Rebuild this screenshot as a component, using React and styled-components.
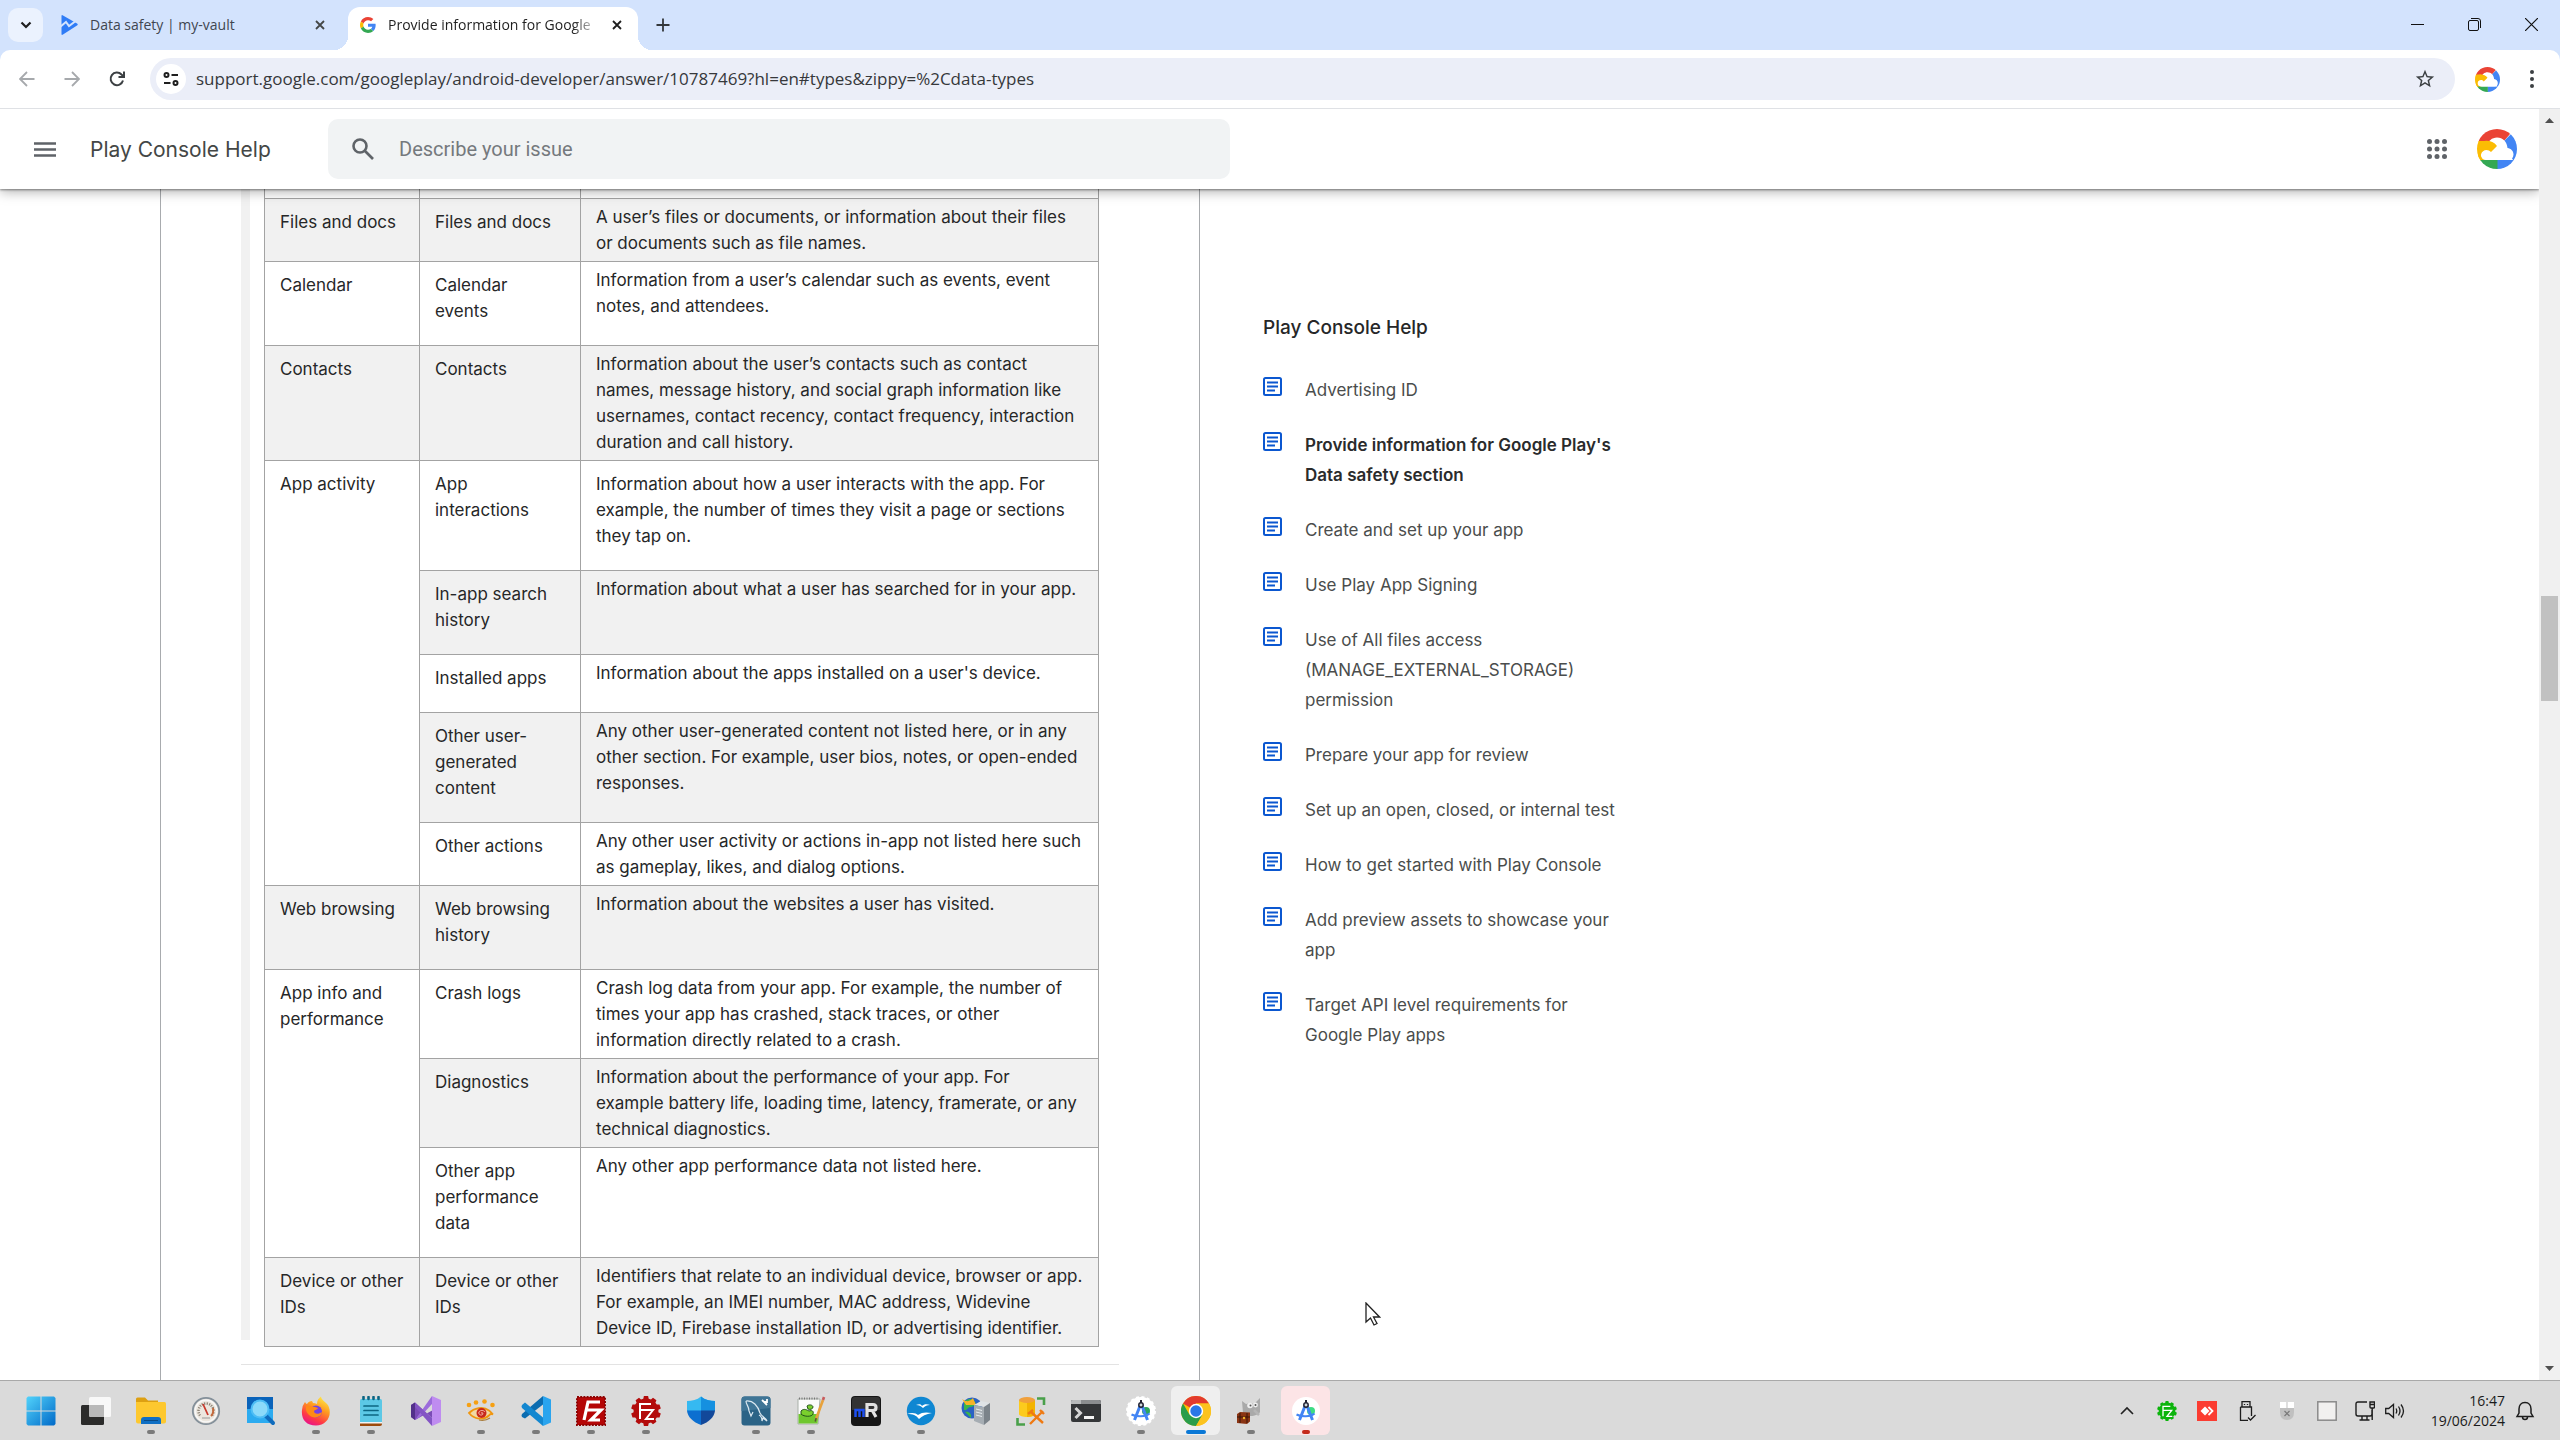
import React from 'react';
import styled, { createGlobalStyle, css } from 'styled-components';

const ui = '"Open Sans", "Noto Sans", sans-serif';
const body = 'Inter, Roboto, sans-serif';

const Global = createGlobalStyle`
  *, *::before, *::after { box-sizing: border-box; }
  html, body { margin: 0; height: 100%; }
  #root { height: 100%; }
  body { font-family: ${body}; color: #262728; background: #fff; overflow: hidden; }
  button, input { font: inherit; color: inherit; border: 0; padding: 0; background: none; outline: 0; }
  svg { display: block; flex: none; }
  a { color: inherit; text-decoration: none; }
`;

const Desktop = styled.div`
  display: flex;
  flex-direction: column;
  height: 100vh;
`;

/* ---------- browser chrome ---------- */

const TabStrip = styled.div`
  flex: none;
  display: flex;
  height: 50px;
  padding-left: 8px;
  background: #d3e3fd;
  font: 14px/20px ${ui};
`;

const IconButton = styled.button`
  flex: none;
  display: flex;
  align-items: center;
  justify-content: center;
  width: ${(p) => p.$w || 32}px;
  height: ${(p) => p.$h || 32}px;
  border-radius: ${(p) => p.$r || 0}px;
  background: ${(p) => p.$bg || 'transparent'};
`;

const TabSearch = styled(IconButton)`
  margin: 8px 9px 0 0;
`;

const Tab = styled.div`
  position: relative;
  display: flex;
  align-items: center;
  width: ${(p) => (p.$active ? 290 : 296)}px;
  height: 36px;
  margin-top: 7px;
  padding: ${(p) => (p.$active ? '0 10px 0 12px' : '0 15px 0 0')};
  ${(p) =>
    p.$active &&
    css`
      height: 43px;
      padding-bottom: 7px;
      border-radius: 12px 12px 0 0;
      background: #fff;
      &::before,
      &::after {
        content: '';
        position: absolute;
        bottom: 0;
        width: 14px;
        height: 14px;
      }
      &::before {
        left: -14px;
        background: radial-gradient(circle at 0 0, transparent 14px, #fff 14px);
      }
      &::after {
        right: -14px;
        background: radial-gradient(circle at 100% 0, transparent 14px, #fff 14px);
      }
    `}
`;

const TabTitle = styled.span`
  flex: 1;
  min-width: 0;
  margin: 0 10px 0 ${(p) => (p.$active ? 12 : 10)}px;
  white-space: nowrap;
  color: ${(p) => (p.$active ? '#1f1f1f' : '#3f4650')};
  ${(p) => p.$active && 'mask-image: linear-gradient(to right, #000 185px, transparent 212px);'}
`;

const NewTab = styled(IconButton)`
  margin: 9px auto 0 9px;
`;

const Toolbar = styled.div`
  flex: none;
  display: flex;
  align-items: center;
  height: 59px;
  padding-left: 5px;
  background: #fff;
  border-bottom: 1px solid #dfe1e5;
  border-radius: 10px 10px 0 0;
`;

const ToolbarBack = styled.div`
  flex: none;
  background: #d3e3fd;
`;

const Omnibox = styled.form`
  flex: 1;
  display: flex;
  align-items: center;
  height: 42px;
  margin: 0 16px 0 10px;
  padding: 0 14px 0 6px;
  border-radius: 21px;
  background: #ebeef8;
`;

const Address = styled.input`
  flex: 1;
  min-width: 0;
  margin-left: 10px;
  font: 17px/24px ${ui};
  color: #36383b;
`;

const Nav = styled.nav`
  display: flex;
  gap: 13px;
  padding: 0 7px 0 6px;
`;

/* ---------- page ---------- */

const Viewport = styled.div`
  flex: 1;
  min-height: 0;
  display: flex;
`;

const Page = styled.div`
  flex: 1;
  min-width: 0;
  display: flex;
  flex-direction: column;
  overflow: hidden;
`;

const HelpHeader = styled.header`
  flex: none;
  position: relative;
  z-index: 1;
  display: flex;
  align-items: center;
  height: 80px;
  padding: 0 22px 0 29px;
  background: #fff;
  box-shadow: 0 1px 2px rgba(0, 0, 0, 0.4), 0 2px 12px rgba(0, 0, 0, 0.35);
`;

const HelpTitle = styled.a`
  flex: none;
  width: 238px;
  margin-left: 29px;
  padding-top: 2px;
  font-size: 21px;
  line-height: 30px;
  color: #444746;
`;

const SearchBox = styled.form`
  display: flex;
  align-items: center;
  width: 902px;
  height: 60px;
  margin-right: auto;
  padding-left: 23px;
  border-radius: 10px;
  background: #f1f3f4;
`;

const SearchInput = styled.input`
  flex: 1;
  min-width: 0;
  margin-left: 24px;
  font: 20px/28px Roboto, sans-serif;
  color: #444746;
  &::placeholder {
    color: #75797d;
    opacity: 1;
  }
`;

const HeaderActions = styled.div`
  display: flex;
  align-items: center;
  gap: 20px;
`;

const Columns = styled.main`
  flex: 1;
  min-height: 0;
  display: flex;
  overflow: hidden;
`;

const Article = styled.article`
  flex: none;
  width: 1040px;
  margin-left: 160px;
  padding: 0 80px;
  border: solid #a8abae;
  border-width: 0 1px;
`;

const Zippy = styled.section`
  padding-left: 14px;
  padding-bottom: 1px;
  border-left: 9px solid #f1f1f1;
`;

const Rule = styled.hr`
  margin: 24px 0 0;
  border: 0;
  border-top: 1px solid #e3e3e3;
`;

const DataTable = styled.table`
  width: 834px;
  margin-bottom: -8px;
  border-collapse: collapse;
  table-layout: fixed;
  font-size: 17px;
  line-height: 26px;
`;

const Column = styled.col`
  width: ${(p) => p.$w}px;
`;

const Row = styled.tr`
  background: ${(p) => (p.$shaded ? '#f1f1f1' : '#fff')};
`;

const Cell = styled.td`
  padding: 5px 0 5px 15px;
  border: 1px solid #a3a3a3;
  vertical-align: top;
  text-align: left;
  white-space: nowrap;
  background: ${(p) => (p.$plain ? '#fff' : 'inherit')};
`;

const CutCell = styled.td`
  height: 9px;
  padding: 0;
  border: solid #a3a3a3;
  border-width: 0 1px 1px;
`;

const Para = styled.p`
  margin: 5px 0 16px;
`;

const Aside = styled.aside`
  padding: 125px 0 0 63px;
`;

const AsideTitle = styled.h2`
  margin: 0 0 33px;
  font-size: 19px;
  line-height: 28px;
  font-weight: 500;
`;

const Links = styled.ul`
  display: flex;
  flex-direction: column;
  gap: 25px;
  margin: 0;
  padding: 0;
  list-style: none;
`;

const LinkRow = styled.a`
  display: flex;
  gap: 23px;
  font-size: 17px;
  line-height: 30px;
  font-weight: ${(p) => (p.$current ? 600 : 400)};
  color: ${(p) => (p.$current ? '#2a2b2c' : '#4a4d4c')};
  svg { margin-top: 2px; }
`;

const Scrollbar = styled.div`
  flex: none;
  display: flex;
  flex-direction: column;
  align-items: center;
  width: 21px;
  background: #f0f0f0;
`;

const ScrollTrack = styled.div`
  flex: 1;
  width: 17px;
`;

const ScrollThumb = styled.div`
  height: 105px;
  background: #c1c1c1;
`;

const Pointer = styled.svg`
  position: absolute;
  left: 1365px;
  top: 1302px;
`;

/* ---------- taskbar ---------- */

const Taskbar = styled.footer`
  flex: none;
  display: flex;
  align-items: center;
  height: 60px;
  padding: 0 23px 0 13px;
  background: #dadada;
  border-top: 1px solid #a9a9a9;
`;

const Apps = styled.div`
  display: flex;
  margin-right: auto;
`;

const AppButton = styled.button`
  position: relative;
  display: flex;
  align-items: center;
  justify-content: center;
  width: 49px;
  height: 49px;
  margin: 0 3px;
  border-radius: 6px;
  background: ${(p) => p.$tile || 'transparent'};
  &::after {
    content: '';
    position: absolute;
    bottom: 1px;
    width: ${(p) => (p.$wide ? 20 : 8)}px;
    height: 4px;
    border-radius: 2px;
    background: ${(p) => p.$mark || 'transparent'};
  }
`;

const Tray = styled.div`
  display: flex;
  align-items: center;
  gap: 8px;
`;

const TrayPair = styled.div`
  display: flex;
  align-items: center;
  gap: 10px;
  padding: 0 4px;
`;

const Clock = styled.time`
  width: 88px;
  text-align: right;
  font: 14px/20px ${ui};
  color: #1b1b1b;
`;

/* ---------- drawings ---------- */

const CloseIcon = ({ c }) => (
  <svg width="10" height="10" viewBox="0 0 10 10" stroke={c} strokeWidth="1.8"><path d="M1 1l8 8M9 1L1 9" /></svg>
);

const CloudLogo = ({ size, id }) => (
  <svg width={size} height={size} viewBox="0 0 40 40">
    <clipPath id={id}><circle cx="20" cy="20" r="20" /></clipPath>
    <g clipPath={`url(#${id})`}>
      <path fill="#ea4335" d="M0 0h40v5H33L27 12 14 14 2 14z" />
      <path fill="#4285f4" d="M34 5L27 12 30 20 36 31H20v9h20V5z" />
      <path fill="#fbbc04" d="M0 12h10v20H0z" />
      <path fill="#34a853" d="M0 31h20.500v9H0z" />
      <path fill="#fff" d="M9 31a5.200 5.200 0 0 1-3-9.500L10 17C11 12 15 8.500 20 8.500c6 0 10 4.500 10.500 10.500 3.500.5 6 3 6 6.500a5.500 5.500 0 0 1-5.500 5.500z" />
      <path fill="#fbbc04" d="M1 15C5 11 15 10 20 17l-6 6c-3-3.500-9-2.500-10 2.500-.3 2 .5 4 2 5.500H1z" />
    </g>
  </svg>
);

const ArticleIcon = () => (
  <svg width="19" height="19" viewBox="0 0 19 19" fill="none" stroke="#0b57d0" strokeWidth="2">
    <rect x="1" y="1" width="17" height="17" rx="1.500" />
    <path d="M4 5.500h11M4 9.500h11M4 13.500h8" />
  </svg>
);

const I = ({ children, s = 30, vb = 30, ...r }) => (
  <svg width={s} height={s} viewBox={`0 0 ${vb} ${vb}`} fill="none" {...r}>{children}</svg>
);

const gearPath = (() => {
  const n = 10;
  let d = '';
  for (let i = 0; i < n; i++) {
    const a = (i / n) * Math.PI * 2 - Math.PI / 2;
    [[-0.22, 12.5], [-0.14, 15], [0.14, 15], [0.22, 12.5]].forEach(([o, r]) => {
      d += `${d ? 'L' : 'M'}${(15 + r * Math.cos(a + o)).toFixed(1)} ${(15 + r * Math.sin(a + o)).toFixed(1)}`;
    });
  }
  return d + 'z';
})();

const FzLines = () => (
  <path d="M9 23V8h11M9 14h7M15 14h7l-7 9h8" stroke="#fff" strokeWidth="2" />
);

const Studio = ({ halo }) => (
  <I>
    <circle cx="15" cy="15" r="14" fill="#fff" />
    {halo && <circle cx="15" cy="15" r="14" stroke="#fff" strokeDasharray="3 2.500" strokeWidth="2" />}
    <circle cx="20" cy="15" r="4" fill={halo ? '#2da55d' : '#3ddc84'} />
    <path d="M14 10L8.500 24M16 10l5.500 14" stroke="#4285f4" strokeWidth="3" />
    <path d="M5.500 18.500c5 2.500 14 2.500 18-1" stroke="#4285f4" strokeWidth="2.200" />
    <path d="M15 4v4" stroke="#223" strokeWidth="2" />
    <circle cx="15" cy="9" r="2.200" fill="#cfd8dc" stroke="#223" strokeWidth="1.500" />
  </I>
);

const icons = {
  start: (
    <I>
      <linearGradient id="win" x1="0" y1="0" x2="1" y2="1"><stop stopColor="#52d3fb" /><stop offset="1" stopColor="#0069c8" /></linearGradient>
      <path fill="url(#win)" d="M2 .5h12.500v14H.5V2zM15.500.5H28L29.500 2v12.500h-14zM.5 15.500h14v14H2L.5 28zM15.500 15.500h14V28L28 29.500H15.500z" />
    </I>
  ),
  views: (
    <I>
      <rect x="0" y="9" width="23" height="20" rx="1.500" fill="#2b2b2a" />
      <rect x="8" y="1" width="22" height="20" rx="1.500" fill="#fff" fillOpacity=".8" />
      <path d="M8 9h15v12H9.500L8 19.500z" fill="#b9b9b9" />
    </I>
  ),
  files: (
    <I>
      <path d="M0 3q0-1.500 1.500-1.500H9l3 3h10V12H0z" fill="#dda012" />
      <path d="M0 6h28.500q1.500 0 1.500 1.500v18q0 2-2 2H2q-2 0-2-2z" fill="#fdc82f" />
      <path d="M5 28v-4q0-3 3-3h14q3 0 3 3v4z" fill="#0f6fc4" />
      <path d="M8 24.500h14" stroke="#0a4a85" />
    </I>
  ),
  gauge: (
    <I>
      <circle cx="15" cy="15" r="13.200" fill="#d9d5cf" stroke="#84909a" strokeWidth="1.800" />
      <circle cx="15" cy="15" r="11" fill="#ece7df" stroke="#f8f8f8" strokeWidth="1.500" />
      <path d="M9 19.500a7.500 7.500 0 1 1 12 0" stroke="#8e8478" strokeWidth="2.500" strokeDasharray="1.200 1.200" />
      <path d="M20 20q3-3 2-8" stroke="#c46a3d" strokeWidth="2" />
      <path d="M12 8l5 11" stroke="#c9392c" strokeWidth="1.800" />
      <path d="M11 22h8" stroke="#999" />
    </I>
  ),
  search: (
    <I>
      <path d="M1 1h26v13H1z" fill="#0a63ba" /><path d="M1 13h26v14H1z" fill="#2cabf0" />
      <path d="M19 19l8 8" stroke="#0f6cbd" strokeWidth="4" strokeLinecap="round" />
      <circle cx="14" cy="13" r="8.500" fill="#8bdafa" stroke="#4dbdf5" strokeWidth="2" />
    </I>
  ),
  firefox: (
    <I>
      <linearGradient id="ff" x1=".8" y1="0" x2=".3" y2="1"><stop stopColor="#fff04a" /><stop offset=".4" stopColor="#ff9a1f" /><stop offset=".75" stopColor="#ff3a45" /><stop offset="1" stopColor="#e8118c" /></linearGradient>
      <path d="M4 6q1 2 2 2c1-2 3-3 5-3l1 2q2 0 4 1c0-4 2-6 4-7.500 0 4 7 6 8 11 3 9-3 18-13 18S0 23 1 14q.5-5 3-8z" fill="url(#ff)" />
      <circle cx="15" cy="15.500" r="6" fill="#7542e5" />
      <path d="M5 10c4-1 6 1 9 1l3 1c-1 2-4 2-4 3 0 3 4 4 8 1-1 7-13 8-16-2z" fill="#ff8a16" />
    </I>
  ),
  notepad: (
    <I>
      <rect x="4" y="3" width="22" height="24" rx="1.500" fill="#5cc8e6" />
      <path d="M4 27h22v1q0 2-2 2H4z" fill="#9c4a0c" /><path d="M4 26h22v1.500H4z" fill="#f3f3f3" />
      <path d="M8 10h14M8 14.500h14M8 19h14" stroke="#0b6583" strokeWidth="1.700" strokeLinecap="round" />
      <path d="M7.500 1v2M12.500 1v2M17.500 1v2M22.500 1v2" stroke="#0b6583" strokeWidth="2.600" strokeLinecap="round" />
    </I>
  ),
  vs: (
    <I>
      <path d="M0 9l4-2.500L22 23v-9L4 24 0 21z" fill="#7a4bb5" />
      <path d="M0 9l4-2.500V24L0 21z" fill="#52308a" />
      <path d="M4 24L21 0v8L9 21z" fill="#9b6bdb" />
      <path d="M21 0l9 4v22l-9 4z" fill="#bf8cf0" />
      <path d="M4 6.500l17 15.500v8L4 11z" fill="#8354c4" />
    </I>
  ),
  eye: (
    <I>
      <path d="M3 17C8 12 17 10 23 14.500c2 1.500 2.500 2.500 4 4-2-1-3-.5-4 1-5 5-15 4-20-2.500z" fill="#f1d9a4" stroke="#f0960f" strokeWidth="1.800" />
      <circle cx="15.500" cy="17" r="5" fill="#c8281c" />
      <path d="M15 17q2-1 2 1c-1 2-5 1-4-2 1-2 5-2 6 0" stroke="#f2b6a8" />
      <path d="M13 24c5 1 8 0 11-2" stroke="#a87b3a" strokeWidth="1.200" />
      <g fill="#f6a013"><circle cx="3" cy="9" r="2.300" /><circle cx="10" cy="6.500" r="2.300" /><circle cx="18.500" cy="5.500" r="2.300" /><circle cx="26.500" cy="9" r="2.300" /></g>
    </I>
  ),
  code: (
    <I>
      <path d="M22 0l8 3.500v23L22 30z" fill="#2aa4ee" />
      <path d="M22 0v8.500L4 22.500 1 21q-1-1.500 0-3z" fill="#0b6cb0" />
      <path d="M1 9l3-2.500 18 15V30L1 12q-1-1.500 0-3z" fill="#1387d0" />
    </I>
  ),
  fzSquare: (
    <I>
      <rect x="1" y="1" width="28" height="28" fill="#b50606" stroke="#8d0404" strokeWidth="2" strokeDasharray="2 1.200" />
      <path d="M8 24L12 6h12M10 14h9M15 14h10L15 24h9" stroke="#fff" strokeWidth="3.200" />
    </I>
  ),
  fzGear: (<I><path d={gearPath} fill="#b30b0b" /><FzLines /></I>),
  shield: (
    <I>
      <path d="M15 .5C19 4 24 5 29 5v10H1V5C6 5 11 4 15 .5z" fill="#35b9f1" /><path d="M15 .5C19 4 24 5 29 5v10H15z" fill="#1590e0" />
      <path d="M1 14.500h14V29C7 26 1.500 21 1 14.500z" fill="#0c6fd0" /><path d="M29 14.500H15V29c8-3 13.500-8 14-14.500z" fill="#12489a" />
    </I>
  ),
  mysql: (
    <I>
      <rect x=".5" y=".5" width="29" height="29" rx="3" fill="#2b6386" />
      <path d="M.5 15V4q0-3.500 3.500-3.500h22q3.500 0 3.500 3.500v8z" fill="#3f7596" />
      <path d="M5 5c7-1 12 5 14 12 2 4 5 4 7 8l-4-3-1 3c0-3-1-5-3-6M5 5c0 4 3 5 3 10l2 5 2-4" stroke="#dbe8f0" strokeWidth="1.200" />
      <path d="M21 4l5 5M26 3v3h-3" stroke="#fff" strokeWidth="1.800" />
    </I>
  ),
  npp: (
    <I>
      <path d="M2 3h22l-2 25H2z" fill="#fbfbfb" stroke="#a9b0a9" /><path d="M2.500 18h20l-1 9.500h-19z" fill="#6fc72e" />
      <path d="M3 2.500h20" stroke="#777" strokeDasharray="1 1.500" strokeWidth="2" />
      <path d="M5 15c3-3 6-1 8 0 3-1 5 0 4 3s-9 3-12 0zM11 10c2-2 6-1 6 1s-3 3-5 2z" fill="#7ad02d" stroke="#22531a" />
      <path d="M27 4l-7 19" stroke="#e8a23c" strokeWidth="2.600" /><path d="M28 1l-1 3" stroke="#c85c5c" strokeWidth="2.600" /><path d="M20.200 22l-1 3.500" stroke="#553" strokeWidth="1.500" />
    </I>
  ),
  mr: (
    <I>
      <rect width="30" height="30" rx="4" fill="#161616" /><path d="M1 14V4q0-3 3-3h22q3 0 3 3v10z" fill="#333" />
      <path d="M4.500 21v-7h8v7M8.500 14v7" stroke="#1d4ff0" strokeWidth="2.500" />
      <path d="M16 21V8.500h6q3 0 3 3t-3 3h-5M21 14l4 7" stroke="#e2e2e2" strokeWidth="3.200" />
    </I>
  ),
  gull: (
    <I>
      <circle cx="15" cy="15" r="14.200" fill="#0f87d2" />
      <path d="M10 9c3-1 5-1 6 1 2-2 5-2 8-1-3 0-5 1-7 3-2-2-4-3-7-3zM1 18c5-2 9-1 11 1 4-3 8-3 14-2-6 1-10 3-13 6-3-4-6-5-12-5z" fill="#fff" />
    </I>
  ),
  server: (
    <I>
      <circle cx="11" cy="12" r="10.500" fill="#2a62c4" /><path d="M3 6c5-5 9-3 11 0s-3 5-5 5-3 4-6 3zM4 16c4-1 7 2 6 6z" fill="#3bb54a" />
      <path d="M1 3q7 5 11-1l3 7H5z" fill="#f6b229" />
      <path d="M13 9l7-4 9 2-6 4z" fill="#dfe3e6" /><path d="M13 9l10 2v18l-10-4z" fill="#a6adb3" /><path d="M23 11l6-4v17l-6 5z" fill="#7b838a" />
      <path d="M15 13l6 1.500M15 16l6 1.500M15 19l6 1.500" stroke="#e8edf0" />
    </I>
  ),
  dbTools: (
    <I>
      <path d="M3 4v14c0 4 16 4 16 0V4z" fill="#fccb1d" /><path d="M11 4h8v14q-2 3-8 3z" fill="#f3b400" /><ellipse cx="11" cy="4" rx="8" ry="3" fill="#f0a03c" />
      <path d="M21 2.500h7V9M1.500 22v6.500H9" stroke="#49a04a" strokeWidth="2.600" />
      <path d="M14 15l13 12M27 15L14 28M12 18l5-4M24 14l4 4" stroke="#ef7a12" strokeWidth="2.400" />
    </I>
  ),
  terminal: (
    <I>
      <rect y="4" width="30" height="22" rx="2" fill="#343638" /><path d="M2 4h26q2 0 2 2v2H0V6q0-2 2-2z" fill="#8b8d8f" /><path d="M0 8V6q0-2 2-2h8v4z" fill="#b8babb" />
      <path d="M4.500 12l5 5-5 5" stroke="#d5d5d5" strokeWidth="3" /><path d="M13 21.500h10" stroke="#f4f4f4" strokeWidth="3" />
    </I>
  ),
  studio: <Studio halo />,
  chrome: (
    <I>
      <circle cx="15" cy="15" r="15" fill="#fbbc04" />
      <path d="M15 15L2 7.500A15 15 0 0 1 28 7.500H15z" fill="#e33b2e" />
      <path d="M2 7.500A15 15 0 0 0 15 30l6.500-11.300L15 15 8.500 18.700z" fill="#2a9d4a" />
      <path d="M28 7.500H15V15l6.500 3.700L15 30A15 15 0 0 0 28 7.500z" fill="#fcc31e" />
      <circle cx="15" cy="15" r="7.200" fill="#fff" /><circle cx="15" cy="15" r="5.700" fill="#2a77e8" />
    </I>
  ),
  gimp: (
    <I>
      <path d="M6 5l4 3c3-1 6-1 8 0l6-6v14c-1 4-14 6-17 1z" fill="#a9a9a9" /><circle cx="14" cy="9.500" r="2.800" fill="#efefef" /><circle cx="19.500" cy="9" r="2.400" fill="#efefef" />
      <circle cx="14.500" cy="9.500" r="1" fill="#555" /><circle cx="19.500" cy="9" r="1" fill="#555" />
      <path d="M18 14l5 5" stroke="#b5b5b5" strokeWidth="2.500" />
      <path d="M1 18l3-2 10 .5v9L11 28 1 27z" fill="#8a3413" /><path d="M1 21h13M4 17v10M11 17v10" stroke="#3a1408" /><circle cx="8" cy="22" r="1.200" fill="#f0b429" />
    </I>
  ),
  studioAlert: <Studio />,
};

const apps = [
  ['Start', 'start'], ['Task View', 'views'], ['File Explorer', 'files', '#7a7a7a'], ['Monitor', 'gauge'], ['Search', 'search'],
  ['Firefox', 'firefox', '#7a7a7a'], ['Notepad', 'notepad', '#7a7a7a'], ['Visual Studio', 'vs'], ['XnView', 'eye', '#7a7a7a'],
  ['Visual Studio Code', 'code', '#7a7a7a'], ['FileZilla', 'fzSquare', '#7a7a7a'], ['FileZilla Server', 'fzGear', '#7a7a7a'],
  ['Security', 'shield'], ['MySQL Workbench', 'mysql', '#7a7a7a'], ['Notepad++', 'npp', '#7a7a7a'], ['mRemote', 'mr'],
  ['OpenOffice', 'gull', '#7a7a7a'], ['Server', 'server'], ['Database Tools', 'dbTools'], ['Terminal', 'terminal'],
  ['Android Studio', 'studio', '#7a7a7a'], ['Chrome', 'chrome', '#0a78d6', '#efefef'], ['GIMP', 'gimp', '#7a7a7a'],
  ['Android Studio project', 'studioAlert', '#c42b1c', '#fce4e6'],
];

const tray = [
  ['Show hidden icons', <I s={20} vb={20}><path d="M4 13l6-6 6 6" stroke="#222" strokeWidth="1.600" /></I>],
  ['FileZilla Server', <I s={20}><path d={gearPath} fill="#0cb40c" /><FzLines /></I>],
  ['AnyDesk', <I s={20} vb={20}><path d="M0 0h20v20H0z" fill="#fb3c31" /><path d="M8 5.500l4.500 4.500L8 14.500 3.500 10z" fill="#fff" /><path d="M11.500 6l4 4-4 4" stroke="#fff" strokeWidth="1.800" /></I>],
  ['Safely remove hardware', <I s={20} vb={20} stroke="#1d1d1d" strokeWidth="1.300"><path d="M5 6V.7h8V6M3.500 6h11v9M3.500 6v13.300H11M7.500 3v1M10.500 3v1M11 16.500l2.500 2.500 5-5" /></I>],
  ['Mouse', <I s={20} vb={20}><path d="M3 1h14v10q0 8-7 8t-7-8z" fill="#c0c0c0" /><path d="M3 1h6.500v6H3zM10.500 1H17v6h-6.500z" fill="#fff" /><path d="M7.500 10l5 5M12.500 10l-5 5" stroke="#777" strokeWidth="1.200" /></I>],
  ['Input', <I s={20} vb={20}><rect x=".8" y=".8" width="18.400" height="18.400" fill="#f1f0ef" stroke="#8a8a8a" strokeWidth="1.500" /></I>],
];

/* ---------- content ---------- */

// Each row lists its cells: lines of text, paragraph spacing, row span.
const rows = [
  { shaded: true, cells: [{ p: 1, t: ['Files and docs'] }, { p: 1, t: ['Files and docs'] }, { t: ['A user’s files or documents, or information about their files', 'or documents such as file names.'] }] },
  { cells: [{ p: 1, t: ['Calendar'] }, { p: 1, t: ['Calendar', 'events'] }, { t: ['Information from a user’s calendar such as events, event', 'notes, and attendees.'] }] },
  { shaded: true, cells: [{ p: 1, t: ['Contacts'] }, { p: 1, t: ['Contacts'] }, { t: ['Information about the user’s contacts such as contact', 'names, message history, and social graph information like', 'usernames, contact recency, contact frequency, interaction', 'duration and call history.'] }] },
  { cells: [{ p: 1, span: 5, t: ['App activity'] }, { p: 1, t: ['App', 'interactions'] }, { p: 1, t: ['Information about how a user interacts with the app. For', 'example, the number of times they visit a page or sections', 'they tap on.'] }] },
  { shaded: true, cells: [{ p: 1, t: ['In-app search', 'history'] }, { t: ['Information about what a user has searched for in your app.'] }] },
  { cells: [{ p: 1, t: ['Installed apps'] }, { t: ["Information about the apps installed on a user's device."] }] },
  { shaded: true, cells: [{ p: 1, t: ['Other user-', 'generated', 'content'] }, { t: ['Any other user-generated content not listed here, or in any', 'other section. For example, user bios, notes, or open-ended', 'responses.'] }] },
  { cells: [{ p: 1, t: ['Other actions'] }, { t: ['Any other user activity or actions in-app not listed here such', 'as gameplay, likes, and dialog options.'] }] },
  { shaded: true, cells: [{ p: 1, t: ['Web browsing'] }, { p: 1, t: ['Web browsing', 'history'] }, { t: ['Information about the websites a user has visited.'] }] },
  { cells: [{ p: 1, span: 3, t: ['App info and', 'performance'] }, { p: 1, t: ['Crash logs'] }, { t: ['Crash log data from your app. For example, the number of', 'times your app has crashed, stack traces, or other', 'information directly related to a crash.'] }] },
  { shaded: true, cells: [{ p: 1, t: ['Diagnostics'] }, { t: ['Information about the performance of your app. For', 'example battery life, loading time, latency, framerate, or any', 'technical diagnostics.'] }] },
  { cells: [{ p: 1, t: ['Other app', 'performance', 'data'] }, { t: ['Any other app performance data not listed here.'] }] },
  { shaded: true, cells: [{ p: 1, t: ['Device or other', 'IDs'] }, { p: 1, t: ['Device or other', 'IDs'] }, { t: ['Identifiers that relate to an individual device, browser or app.', 'For example, an IMEI number, MAC address, Widevine', 'Device ID, Firebase installation ID, or advertising identifier.'] }] },
];

const links = [
  ['Advertising ID'],
  ["Provide information for Google Play's", 'Data safety section'],
  ['Create and set up your app'],
  ['Use Play App Signing'],
  ['Use of All files access', '(MANAGE_EXTERNAL_STORAGE)', 'permission'],
  ['Prepare your app for review'],
  ['Set up an open, closed, or internal test'],
  ['How to get started with Play Console'],
  ['Add preview assets to showcase your', 'app'],
  ['Target API level requirements for', 'Google Play apps'],
];

const Lines = ({ of }) => of.map((line, i) => (
  <React.Fragment key={line}>{i > 0 && <br />}{line}</React.Fragment>
));

function Browser() {
  return (
    <>
      <TabStrip>
        <TabSearch $w={35} $h={34} $r={10} $bg="#ebf2fe" aria-label="Search tabs">
          <svg width="12" height="8" viewBox="0 0 12 8" fill="none" stroke="#1f1f1f" strokeWidth="2.200"><path d="M1.500 1.500L6 6l4.500-4.500" /></svg>
        </TabSearch>
        <Tab>
          <svg width="28" height="20" viewBox="-8 0 28 20"><path d="M1.500 1q0-1.500 1.500-.5l14 8q1.500 1 0 2l-14 9q-1.500 1-1.500-.5z" fill="#2f7cf6" /><path d="M0 12l6-5 3 4 8-6" stroke="#d3e3fd" strokeWidth="2" fill="none" /></svg>
          <TabTitle>Data safety | my-vault</TabTitle>
          <IconButton $w={26} $h={26} aria-label="Close tab"><CloseIcon c="#444746" /></IconButton>
        </Tab>
        <Tab $active>
          <svg width="16" height="16" viewBox="0 0 48 48">
            <path fill="#EA4335" d="M24 9.500c3.540 0 6.710 1.220 9.210 3.600l6.850-6.850C35.900 2.380 30.470 0 24 0 14.620 0 6.510 5.380 2.560 13.220l7.980 6.190C12.430 13.720 17.740 9.500 24 9.500z" />
            <path fill="#4285F4" d="M46.980 24.550c0-1.570-.15-3.090-.38-4.550H24v9.020h12.940c-.58 2.960-2.260 5.480-4.780 7.180l7.730 6c4.510-4.180 7.090-10.360 7.090-17.650z" />
            <path fill="#FBBC05" d="M10.530 28.590c-.48-1.450-.76-2.990-.76-4.590s.27-3.140.76-4.590l-7.980-6.190C.92 16.460 0 20.120 0 24c0 3.880.92 7.540 2.560 10.780l7.970-6.190z" />
            <path fill="#34A853" d="M24 48c6.480 0 11.930-2.130 15.890-5.810l-7.730-6c-2.150 1.450-4.920 2.300-8.160 2.300-6.260 0-11.570-4.220-13.470-9.910l-7.980 6.190C6.510 42.620 14.620 48 24 48z" />
          </svg>
          <TabTitle $active>Provide information for Google</TabTitle>
          <IconButton $w={22} $h={26} aria-label="Close tab"><CloseIcon c="#1f1f1f" /></IconButton>
        </Tab>
        <NewTab aria-label="New tab">
          <svg width="14" height="14" viewBox="0 0 14 14" stroke="#33373b" strokeWidth="1.800"><path d="M7 .5v13M.5 7h13" /></svg>
        </NewTab>
        <IconButton $w={57} $h={48} aria-label="Minimize">
          <svg width="13" height="13" viewBox="0 0 13 13" stroke="#111"><path d="M0 6.500h13" /></svg>
        </IconButton>
        <IconButton $w={57} $h={48} aria-label="Restore">
          <svg width="13" height="13" viewBox="0 0 13 13" fill="none" stroke="#111"><rect x=".5" y="2.500" width="10" height="10" rx="1.500" /><path d="M3 .5h7q2.500 0 2.500 2.500v7" /></svg>
        </IconButton>
        <IconButton $w={57} $h={48} aria-label="Close">
          <svg width="13" height="13" viewBox="0 0 13 13" stroke="#111" strokeWidth="1.200"><path d="M0 0l13 13M13 0L0 13" /></svg>
        </IconButton>
      </TabStrip>
      <ToolbarBack>
        <Toolbar>
          <Nav>
            <IconButton aria-label="Back">
              <svg width="16" height="16" viewBox="0 0 16 16" fill="none" stroke="#a6a9ac" strokeWidth="1.800"><path d="M15.500 8H1.500M8 1L1 8l7 7" /></svg>
            </IconButton>
            <IconButton aria-label="Forward">
              <svg width="16" height="16" viewBox="0 0 16 16" fill="none" stroke="#a6a9ac" strokeWidth="1.800"><path d="M.5 8h14M8 1l7 7-7 7" /></svg>
            </IconButton>
            <IconButton aria-label="Reload">
              <svg width="16" height="16" viewBox="0 0 16 16" fill="none" stroke="#3c4043" strokeWidth="2"><path d="M14 9.500A6.300 6.300 0 1 1 12.500 3.500L14.500 5.500M15 .5V6H9.500" /></svg>
            </IconButton>
          </Nav>
          <Omnibox>
            <IconButton type="button" $w={30} $h={30} $r={15} $bg="#fff" aria-label="Site information">
              <svg width="16" height="14" viewBox="0 0 16 14" fill="none" stroke="#1f1f1f" strokeWidth="2"><circle cx="3.500" cy="3" r="2" /><path d="M8.500 3H15M1 11h6.500" /><circle cx="12.500" cy="11" r="2" /></svg>
            </IconButton>
            <Address aria-label="Address" defaultValue="support.google.com/googleplay/android-developer/answer/10787469?hl=en#types&zippy=%2Cdata-types" />
            <IconButton type="button" aria-label="Bookmark this page">
              <svg width="22" height="22" viewBox="0 0 24 24" fill="#3c4043"><path d="M22 9.240l-7.190-.62L12 2 9.190 8.630 2 9.240l5.460 4.730L5.820 21 12 17.270 18.180 21l-1.630-7.030L22 9.240zM12 15.400l-3.760 2.270 1-4.280-3.320-2.880 4.380-.38L12 6.100l1.710 4.040 4.380.38-3.320 2.880 1 4.280L12 15.400z" /></svg>
            </IconButton>
          </Omnibox>
          <IconButton aria-label="Profile"><CloudLogo size={25} id="cl-small" /></IconButton>
          <IconButton $w={57} aria-label="Menu">
            <svg width="4" height="18" viewBox="0 0 4 18" fill="#3c4043"><circle cx="2" cy="2" r="2" /><circle cx="2" cy="9" r="2" /><circle cx="2" cy="16" r="2" /></svg>
          </IconButton>
        </Toolbar>
      </ToolbarBack>
    </>
  );
}

function DataTypes() {
  return (
    <DataTable>
      <colgroup><Column $w={155} /><Column $w={161} /><Column $w={518} /></colgroup>
      <tbody>
        <tr><CutCell /><CutCell /><CutCell /></tr>
        {rows.map((row, i) => (
          <Row key={i} $shaded={row.shaded}>
            {row.cells.map((c, j) => (
              <Cell key={j} rowSpan={c.span} $plain={c.span > 1}>
                {c.p ? <Para><Lines of={c.t} /></Para> : <Lines of={c.t} />}
              </Cell>
            ))}
          </Row>
        ))}
      </tbody>
    </DataTable>
  );
}

function Help() {
  return (
    <Viewport>
      <Page>
        <HelpHeader>
          <IconButton aria-label="Main menu">
            <svg width="22" height="15" viewBox="0 0 22 15" stroke="#5f6368" strokeWidth="2.400"><path d="M0 1.500h22M0 7.500h22M0 13.500h22" /></svg>
          </IconButton>
          <HelpTitle href="#home">Play Console Help</HelpTitle>
          <SearchBox>
            <svg width="24" height="24" viewBox="0 0 24 24" fill="none" stroke="#5f6368" strokeWidth="2.600"><circle cx="9" cy="9" r="6.500" /><path d="M14 14l8 8" /></svg>
            <SearchInput type="text" placeholder="Describe your issue" aria-label="Describe your issue" />
          </SearchBox>
          <HeaderActions>
            <IconButton $w={40} $h={40} aria-label="Google apps">
              <svg width="20" height="20" viewBox="0 0 20 20" fill="#5f6368">
                {[2.5, 10, 17.5].map((y) => [2.5, 10, 17.5].map((x) => <circle key={`${x}-${y}`} cx={x} cy={y} r="2.500" />))}
              </svg>
            </IconButton>
            <IconButton $w={40} $h={40} aria-label="Account"><CloudLogo size={40} id="cl-large" /></IconButton>
          </HeaderActions>
        </HelpHeader>
        <Columns>
          <Article>
            <Zippy><DataTypes /></Zippy>
            <Rule />
          </Article>
          <Aside>
            <AsideTitle>Play Console Help</AsideTitle>
            <Links>
              {links.map((l, i) => (
                <li key={l[0]}>
                  <LinkRow href="#article" $current={i === 1}><ArticleIcon /><span><Lines of={l} /></span></LinkRow>
                </li>
              ))}
            </Links>
          </Aside>
        </Columns>
      </Page>
      <Scrollbar>
        <svg width="9" height="487" viewBox="0 0 9 487" fill="#505050"><path d="M0 14h9L4.500 9z" /></svg>
        <ScrollTrack><ScrollThumb /></ScrollTrack>
        <svg width="9" height="22" viewBox="0 0 9 22" fill="#505050"><path d="M0 8h9l-4.500 5z" /></svg>
      </Scrollbar>
    </Viewport>
  );
}

function TaskbarArea() {
  return (
    <Taskbar>
      <Apps>
        {apps.map(([label, icon, mark, tile]) => (
          <AppButton key={label} aria-label={label} $mark={mark} $tile={tile} $wide={icon === 'chrome'}>{icons[icon]}</AppButton>
        ))}
      </Apps>
      <Tray>
        {tray.map(([label, icon]) => <IconButton key={label} aria-label={label}>{icon}</IconButton>)}
        <TrayPair>
          <I s={20} vb={20} stroke="#1d1d1d" strokeWidth="1.400"><path d="M12 1H3Q1 1 1 3v10q0 2 2 2h12q2 0 2-2V9M7 15v4M12 15v4M4.500 19h10M15 1h4.500v5q0 1-1 1H16q-1 0-1-1zM17.200 7v12M15 3.500h4.500" /></I>
          <I s={20} vb={20} stroke="#1d1d1d" strokeWidth="1.300"><path d="M.7 7.500v5h3L8.500 16.500v-13l-4.800 4zM11 7.500q1.500 2.500 0 5M13.500 5.500q3 4.500 0 9M16 3.500q5 6.500 0 13" /></I>
        </TrayPair>
        <Clock dateTime="2024-06-19T16:47">16:47<br />19/06/2024</Clock>
        <IconButton $w={24} aria-label="Notifications">
          <I s={20} vb={20} stroke="#1d1d1d" strokeWidth="1.500"><path d="M10 1.500C6 1.500 4 4.500 4 8v4l-2 3.500h16L16 12V8c0-3.500-2-6.500-6-6.500zM7.500 16q0 2.500 2.500 2.500t2.500-2.500" /></I>
        </IconButton>
      </Tray>
    </Taskbar>
  );
}

export default function App() {
  return (
    <Desktop>
      <Global />
      <Browser />
      <Help />
      <TaskbarArea />
      <Pointer width="16" height="25" viewBox="0 0 16 25" fill="#fff" stroke="#222" strokeWidth="1.300"><path d="M1 1v19l4.500-4 3.500 7 3-1.500-3.500-6.500H14.500z" /></Pointer>
    </Desktop>
  );
}
